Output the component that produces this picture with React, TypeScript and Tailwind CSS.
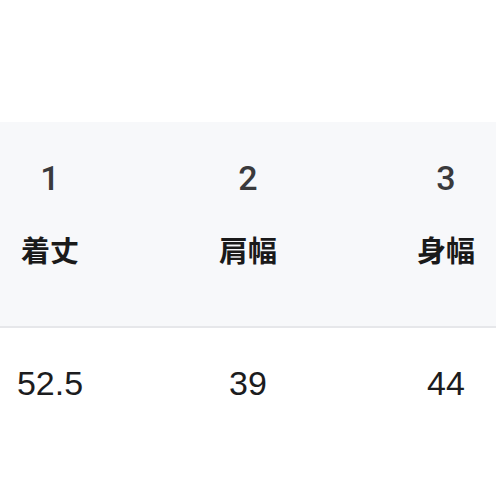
import React from "react";

const cols = [
  { n: "1", label: "着丈", v: "52.5" },
  { n: "2", label: "肩幅", v: "39" },
  { n: "3", label: "身幅", v: "44" },
];

export default function App() {
  return (
    <div className="w-[496px] h-[496px] bg-white overflow-hidden">
      <div className="h-[122px]" />
      <div className="h-[206px] bg-[#f7f8fa] border-b-2 border-[#e6e7ea]">
        <div className="flex ml-[-49px] pt-[36px]">
          {cols.map((c) => (
            <div key={c.n} className="w-[198px] shrink-0 flex flex-col items-center">
              <div className="h-[40px] leading-[40px] text-[34px] font-medium text-[#3a3a3c] font-['Roboto',sans-serif]">
                {c.n}
              </div>
              <div className="mt-[31px] h-[40px] leading-[40px] text-[29px] font-bold text-[#1a1a1a] font-['Noto_Sans_CJK_JP',sans-serif]">
                {c.label}
              </div>
            </div>
          ))}
        </div>
      </div>
      <div className="flex ml-[-49px] pt-[35px]">
        {cols.map((c) => (
          <div key={c.n} className="w-[198px] shrink-0 flex justify-center">
            <div className="h-[40px] leading-[40px] text-[34px] text-[#1c1c1e] font-['Liberation_Sans',sans-serif]">
              {c.v}
            </div>
          </div>
        ))}
      </div>
    </div>
  );
}
